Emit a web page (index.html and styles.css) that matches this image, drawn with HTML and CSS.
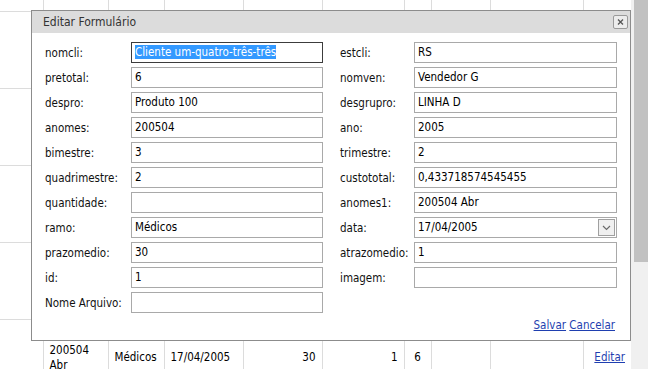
FILE: index.html
```html
<!DOCTYPE html>
<html lang="pt-BR">
<head>
<meta charset="utf-8">
<title>Editar Formulário</title>
<link rel="stylesheet" href="styles.css">
</head>
<body>
<div class="screen">
  <div class="page">
    <table class="grid">
      <colgroup>
        <col style="width:43px"><col style="width:65px"><col style="width:56px"><col style="width:79px"><col style="width:79px"><col style="width:82px"><col style="width:27px"><col style="width:59px"><col style="width:93px"><col style="width:48px">
      </colgroup>
      <tr class="r-top"><td></td><td></td><td></td><td></td><td></td><td></td><td></td><td></td><td></td><td></td></tr>
      <tr class="r"><td></td><td></td><td></td><td></td><td></td><td></td><td></td><td></td><td></td><td></td></tr>
      <tr class="r"><td></td><td></td><td></td><td></td><td></td><td></td><td></td><td></td><td></td><td></td></tr>
      <tr class="r"><td></td><td></td><td></td><td></td><td></td><td></td><td></td><td></td><td></td><td></td></tr>
      <tr class="r"><td></td><td></td><td></td><td></td><td></td><td></td><td></td><td></td><td></td><td></td></tr>
      <tr class="r">
        <td></td>
        <td>200504 Abr</td>
        <td>Médicos</td>
        <td>17/04/2005</td>
        <td class="num">30</td>
        <td class="num">1</td>
        <td class="mid">6</td>
        <td></td>
        <td></td>
        <td class="num"><a href="#">Editar</a></td>
      </tr>
    </table>

    <div class="dialog">
      <div class="titlebar">
        <span>Editar Formulário</span>
        <span class="close"><svg width="13" height="12" viewBox="0 0 13 12"><path d="M4 3.5 L9 8.5 M9 3.5 L4 8.5" stroke="#555" stroke-width="1.3" fill="none"/></svg></span>
      </div>
      <div class="form">
        <label>nomcli:</label><div class="field w1 focus"><span class="sel">Cliente um-quatro-três-três</span></div>
        <label>estcli:</label><div class="field w2">RS</div>

        <label>pretotal:</label><div class="field w1">6</div>
        <label>nomven:</label><div class="field w2">Vendedor G</div>

        <label>despro:</label><div class="field w1">Produto 100</div>
        <label>desgrupro:</label><div class="field w2">LINHA D</div>

        <label>anomes:</label><div class="field w1">200504</div>
        <label>ano:</label><div class="field w2">2005</div>

        <label>bimestre:</label><div class="field w1">3</div>
        <label>trimestre:</label><div class="field w2">2</div>

        <label>quadrimestre:</label><div class="field w1">2</div>
        <label>custototal:</label><div class="field w2">0,433718574545455</div>

        <label>quantidade:</label><div class="field w1"></div>
        <label>anomes1:</label><div class="field w2">200504 Abr</div>

        <label>ramo:</label><div class="field w1">Médicos</div>
        <label>data:</label><div class="field w2 date"><span>17/04/2005</span><span class="dd"><svg width="15" height="15" viewBox="0 0 15 15"><path d="M4 6 L7.5 9.5 L11 6" stroke="#6a6a6a" stroke-width="1.2" fill="none"/></svg></span></div>

        <label>prazomedio:</label><div class="field w1">30</div>
        <label>atrazomedio:</label><div class="field w2">1</div>

        <label>id:</label><div class="field w1">1</div>
        <label>imagem:</label><div class="field w2"></div>

        <label>Nome Arquivo:</label><div class="field w1"></div>
      </div>
      <div class="actions"><a href="#">Salvar</a> <a href="#">Cancelar</a></div>
    </div>
  </div>
  <div class="scrollbar"><div class="thumb"></div></div>
</div>
</body>
</html>
```

FILE: styles.css
```css
* { box-sizing: border-box; }
html, body { margin: 0; padding: 0; }
body {
  font-family: "DejaVu Sans Condensed", "Liberation Sans", sans-serif;
  font-size: 11.5px;
  color: #000;
  background: #fff;
  overflow: hidden;
}
a { color: #1f3fb0; text-decoration: underline; }

.screen { display: flex; height: 369px; width: 648px; }
.page { position: relative; width: 631px; height: 369px; overflow: hidden; }
.scrollbar { width: 17px; height: 369px; background: #f0f0f0; padding-left: 3px; }
.thumb { height: 262px; background: #c1c1c1; }

/* background table */
.grid { border-collapse: collapse; table-layout: fixed; width: 631px; }
.grid td {
  border: 1px solid #dcdcdc;
  padding: 0 6px;
  vertical-align: middle;
  line-height: 15px;
  overflow: hidden;
}
.grid tr.r-top td { border-top: none; height: 11px; }
.grid tr.r td { height: 77px; }
.grid td:first-child { border-left: none; }
.grid td:last-child { border-right: none; }
.grid td.num { text-align: right; }
.grid td.mid { text-align: center; }

/* dialog */
.dialog {
  position: absolute;
  left: 31px;
  top: 10px;
  width: 600px;
  height: 331px;
  border: 1px solid #8c8c8c;
  background: #fff;
  display: flex;
  flex-direction: column;
}
.titlebar {
  height: 22px;
  background: #dcdcdc;
  display: flex;
  align-items: center;
  justify-content: space-between;
  padding: 0 2px 0 11px;
  color: #333;
  font-size: 12px;
}
.close {
  width: 15px;
  height: 14px;
  border: 1px solid #9a9a9a;
  border-radius: 2px;
  background: #ececec;
  display: flex;
  align-items: center;
  justify-content: center;
}
.close svg { display: block; }

.form {
  display: grid;
  grid-template-columns: 86px 209px 74px 203px;
  row-gap: 4px;
  padding: 9px 0 0 13px;
  align-items: center;
}
.form label { color: #111; white-space: nowrap; }
.field {
  height: 21px;
  border: 1px solid #a9a9a9;
  padding: 0 3px;
  line-height: 19px;
  white-space: nowrap;
  overflow: hidden;
  background: #fff;
}
.w1 { width: 192px; }
.w2 { width: 203px; }
.focus { border-color: #3c3c3c; }
.sel { background: #3399ff; color: #fff; }
.date { display: flex; justify-content: space-between; padding-right: 0; }
.dd {
  width: 17px;
  height: 17px;
  margin: 1px 1px 0 0;
  border: 1px solid #a0a0a0;
  background: #f0f0f0;
  display: flex;
  align-items: center;
  justify-content: center;
}
.dd svg { display: block; }

.actions {
  margin-top: 5px;
  text-align: right;
  padding-right: 15px;
  line-height: 14px;
}
```
